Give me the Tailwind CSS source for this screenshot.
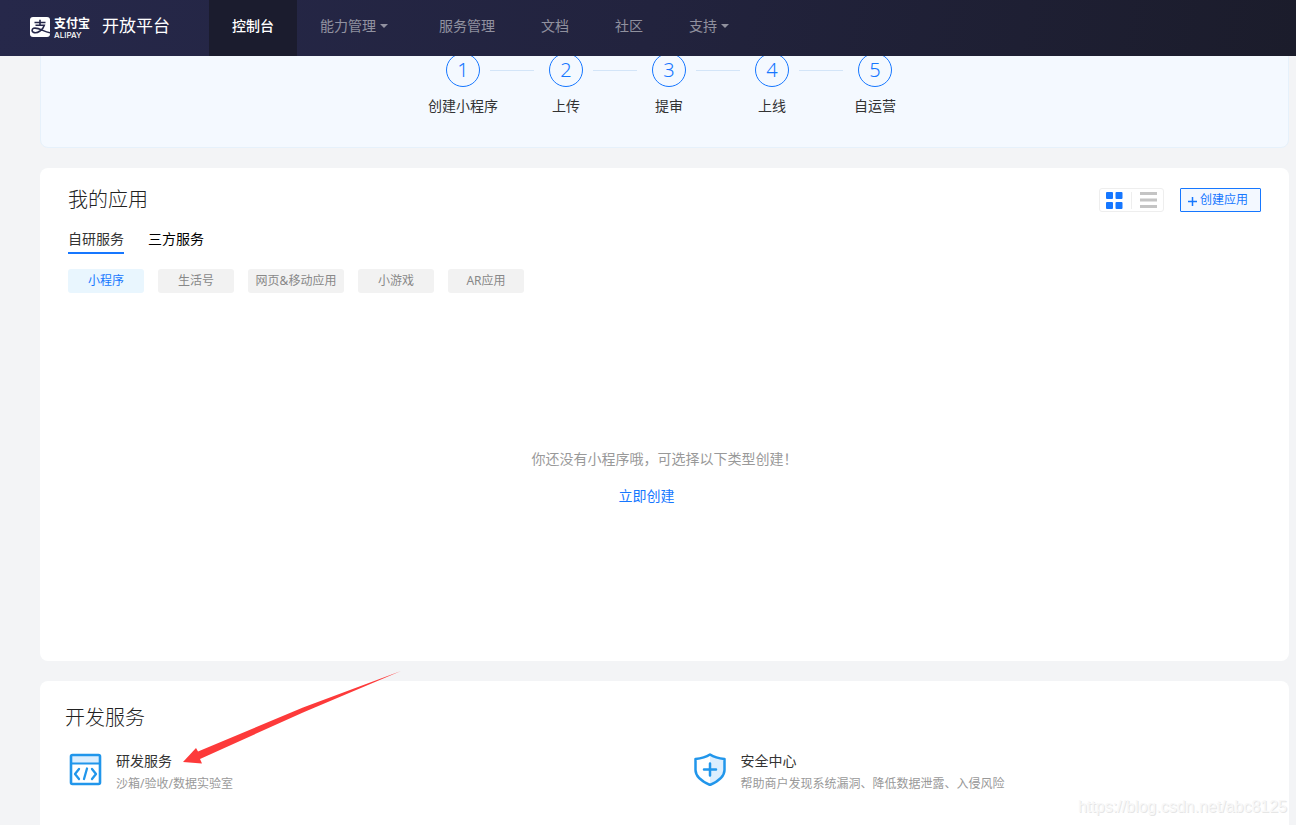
<!DOCTYPE html>
<html lang="zh-CN">
<head>
<meta charset="utf-8">
<meta name="viewport" content="width=device-width, initial-scale=1">
<title>支付宝开放平台 - 控制台</title>
<script src="https://cdn.jsdelivr.net/npm/@tailwindcss/browser@4"></script>
</head>
<body class="bg-[#f3f4f6] font-['Noto_Sans','Noto_Sans_CJK_SC',sans-serif] text-sm font-normal text-[#333]">
<div class="relative flex h-screen flex-col overflow-hidden">

  <header class="relative z-10 flex h-14 shrink-0 bg-linear-100 from-[#26284a] via-[#22233e] to-[#1b1c2b]">
    <a href="#" class="flex w-[209px] items-center pb-1 pl-[30px] text-white">
      <svg class="mt-[2px] size-5" viewBox="0 0 20 20" fill="none" aria-hidden="true">
        <rect width="20" height="20" rx="3" fill="#fff"/>
        <path d="M4.500 5.500h11M10 2.800v5.200M5.500 8.200h8.800c-.7 2.400-2.200 4.400-4.300 5.800-2.200 1.500-5 2.100-6.700 1.200-1.800-1-1.400-3.300.3-3.900 2.600-.9 5.900.6 9.100 2.100 2.200 1 4.400 1.900 7.300 2.300" stroke="#26284a" stroke-width="1.600"/>
      </svg>
      <span class="mt-1 ml-1 flex w-9 flex-col gap-px">
        <span class="text-xs leading-3 font-bold">支付宝</span>
        <span class="font-[Inter,sans-serif] text-[8px] leading-2 font-medium">ALIPAY</span>
      </span>
      <span class="ml-3 text-[17px] leading-6">开放平台</span>
    </a>
    <nav class="flex text-white/50">
      <a href="#" aria-current="page" class="flex items-center bg-[#1b1c2e] px-[23px] pb-1 font-medium text-white">控制台</a>
      <a href="#" class="flex items-center gap-1 pr-7 pb-1 pl-[23px]">能力管理
        <svg class="h-1 w-2" viewBox="0 0 8 4" fill="currentColor" aria-hidden="true"><path d="M0 0h8L4 4z"/></svg></a>
      <a href="#" class="flex items-center px-[23px] pb-1">服务管理</a>
      <a href="#" class="flex items-center px-[23px] pb-1">文档</a>
      <a href="#" class="flex items-center px-[23px] pb-1">社区</a>
      <a href="#" class="flex items-center gap-1 px-[23px] pb-1">支持
        <svg class="h-1 w-2" viewBox="0 0 8 4" fill="currentColor" aria-hidden="true"><path d="M0 0h8L4 4z"/></svg></a>
    </nav>
  </header>

  <main class="flex flex-1 flex-col gap-5 pr-[7px] pl-10">
    <section aria-label="创建流程" class="-mt-4 rounded-lg border border-[#e6f1fb] bg-[#f4f9ff] pt-3 pb-[30px]">
      <ol class="flex justify-center pl-[9px]">
        <li class="flex w-[34px] flex-col items-center gap-2 whitespace-nowrap"><span class="flex size-[34px] items-center justify-center rounded-full border border-[#1677ff] text-xl leading-8 font-light text-[#1677ff]">1</span><span class="leading-[22px]">创建小程序</span></li>
        <li aria-hidden="true" class="mt-[17px] mr-[15px] ml-[10px] h-px w-11 bg-[#d3e5f8]"></li>
        <li class="flex w-[34px] flex-col items-center gap-2 whitespace-nowrap"><span class="flex size-[34px] items-center justify-center rounded-full border border-[#1677ff] text-xl leading-8 font-light text-[#1677ff]">2</span><span class="leading-[22px]">上传</span></li>
        <li aria-hidden="true" class="mt-[17px] mr-[15px] ml-[10px] h-px w-11 bg-[#d3e5f8]"></li>
        <li class="flex w-[34px] flex-col items-center gap-2 whitespace-nowrap"><span class="flex size-[34px] items-center justify-center rounded-full border border-[#1677ff] text-xl leading-8 font-light text-[#1677ff]">3</span><span class="leading-[22px]">提审</span></li>
        <li aria-hidden="true" class="mt-[17px] mr-[15px] ml-[10px] h-px w-11 bg-[#d3e5f8]"></li>
        <li class="flex w-[34px] flex-col items-center gap-2 whitespace-nowrap"><span class="flex size-[34px] items-center justify-center rounded-full border border-[#1677ff] text-xl leading-8 font-light text-[#1677ff]">4</span><span class="leading-[22px]">上线</span></li>
        <li aria-hidden="true" class="mt-[17px] mr-[15px] ml-[10px] h-px w-11 bg-[#d3e5f8]"></li>
        <li class="flex w-[34px] flex-col items-center gap-2 whitespace-nowrap"><span class="flex size-[34px] items-center justify-center rounded-full border border-[#1677ff] text-xl leading-8 font-light text-[#1677ff]">5</span><span class="leading-[22px]">自运营</span></li>
      </ol>
    </section>

    <section class="rounded-lg bg-white px-7 pt-5 pb-[155px]">
      <div class="flex items-center">
        <h2 class="text-xl leading-6 font-light text-[#222]">我的应用</h2>
        <div class="ml-auto flex h-6 items-center rounded-[3px] border border-[#eee]">
          <button type="button" aria-label="卡片视图" class="flex w-8 border-r border-[#eee] pl-[6px]">
            <svg class="size-[17px]" viewBox="0 0 17 17" fill="#1677ff" aria-hidden="true"><rect width="7" height="7" rx="1"/><rect x="9.500" width="7" height="7" rx="1"/><rect y="10" width="7" height="7" rx="1"/><rect x="9.500" y="10" width="7" height="7" rx="1"/></svg>
          </button>
          <button type="button" aria-label="列表视图" class="flex w-[31px] pl-2">
            <svg class="h-4 w-[17px]" viewBox="0 0 17 16" fill="#c4c4c4" aria-hidden="true"><path d="M0 0h17v3H0zM0 6.500h17v3H0zM0 13h17v3H0z"/></svg>
          </button>
        </div>
        <button type="button" class="ml-4 flex h-6 w-[81px] items-center gap-[3px] rounded-[1px] border border-[#1677ff] bg-[#f3f8ff] pl-[7px] text-xs leading-6 text-[#1677ff]">
          <svg class="mt-[2px] size-[9px]" viewBox="0 0 9 9" stroke="#1677ff" stroke-width="1.500" aria-hidden="true"><path d="M4.500 0v9M0 4.500h9"/></svg>创建应用</button>
      </div>
      <div role="tablist" class="mt-4 flex gap-6">
        <button type="button" role="tab" aria-selected="true" class="border-b-2 border-[#1677ff] pb-[2px] leading-[22px]">自研服务</button>
        <button type="button" role="tab" aria-selected="false" class="border-b-2 border-transparent pb-[2px] leading-[22px] text-black">三方服务</button>
      </div>
      <div class="mt-[15px] flex gap-[14px] text-xs text-[#888]">
        <button type="button" class="h-6 w-[76px] rounded-[3px] bg-[#e9f6fe] text-[#1677ff]">小程序</button>
        <button type="button" class="h-6 w-[76px] rounded-[3px] bg-[#f2f2f2]">生活号</button>
        <button type="button" class="h-6 w-24 rounded-[3px] bg-[#f2f2f2]">网页&amp;移动应用</button>
        <button type="button" class="h-6 w-[76px] rounded-[3px] bg-[#f2f2f2]">小游戏</button>
        <button type="button" class="h-6 w-[76px] rounded-[3px] bg-[#f2f2f2]">AR应用</button>
      </div>
      <p class="mt-[156px] text-center leading-5 text-[#999]">你还没有小程序哦，可选择以下类型创建！</p>
      <p class="mt-[17px] pr-9 text-center leading-5"><a href="#" class="text-[#1677ff]">立即创建</a></p>
    </section>

    <section class="relative flex-1 rounded-t-lg bg-white pt-[23px]">
      <h2 class="pl-[25px] text-xl leading-7 font-light text-[#222]">开发服务</h2>
      <div class="mt-[19px] grid grid-cols-2">
        <a href="#" class="flex gap-[14px] pl-[29px]">
          <svg class="mt-[2px] size-[33px]" viewBox="0 0 33 33" fill="none" stroke="#2196eb" stroke-width="2.600" stroke-linecap="round" stroke-linejoin="round" aria-hidden="true">
            <path d="M2 2h29v9H2z" fill="#dceefe" stroke="none"/>
            <rect x="2" y="2" width="29" height="29" rx="1.500"/><path d="M2 10.500h29" stroke-width="2"/>
            <path d="M10 16l-4 5 4 5M23 16l4 5-4 5M18 15.500l-3 10.500" stroke-width="2.300"/>
          </svg>
          <span><strong class="block leading-5 font-normal">研发服务</strong><span class="mt-1 block text-xs leading-[18px] text-[#999]">沙箱/验收/数据实验室</span></span>
        </a>
        <a href="#" class="flex gap-[14px] pl-[29px]">
          <svg class="mt-[2px] size-[33px]" viewBox="0 0 33 33" fill="none" stroke="#2196eb" stroke-width="2.500" stroke-linecap="round" stroke-linejoin="round" aria-hidden="true">
            <path d="M16 2c4 2.500 8.500 3.500 14 4v11c0 6.500-5 10.500-14 14.500z" fill="#dceefe" stroke="none"/>
            <path d="M16 1.500c4 2.700 9 4 14.500 4.500v11c0 6.500-5.500 11-14.500 15C7 28 1.500 23.500 1.500 17V6C7 5.500 12 4.200 16 1.500z"/>
            <path d="M16 10.500v12M10 16.500h12"/>
          </svg>
          <span><strong class="block leading-5 font-normal">安全中心</strong><span class="mt-1 block text-xs leading-[18px] text-[#999]">帮助商户发现系统漏洞、降低数据泄露、入侵风险</span></span>
        </a>
      </div>
      <svg class="pointer-events-none absolute -top-[11px] left-[143px] h-[94px] w-[220px]" viewBox="0 0 220 94" fill="#fd3a3a" aria-hidden="true">
        <path d="M0 92L13 78l2 3.500L120 37.500 218 1 120 42.500 17 89l2 4.500z"/>
      </svg>
    </section>
  </main>

  <p class="absolute right-[9px] bottom-[6px] font-['Liberation_Sans',sans-serif] text-base text-[#f8f8f8] [text-shadow:1px_1px_0_#e6e6e6]">https://blog.csdn.net/abc8125</p>
</div>
</body>
</html>
